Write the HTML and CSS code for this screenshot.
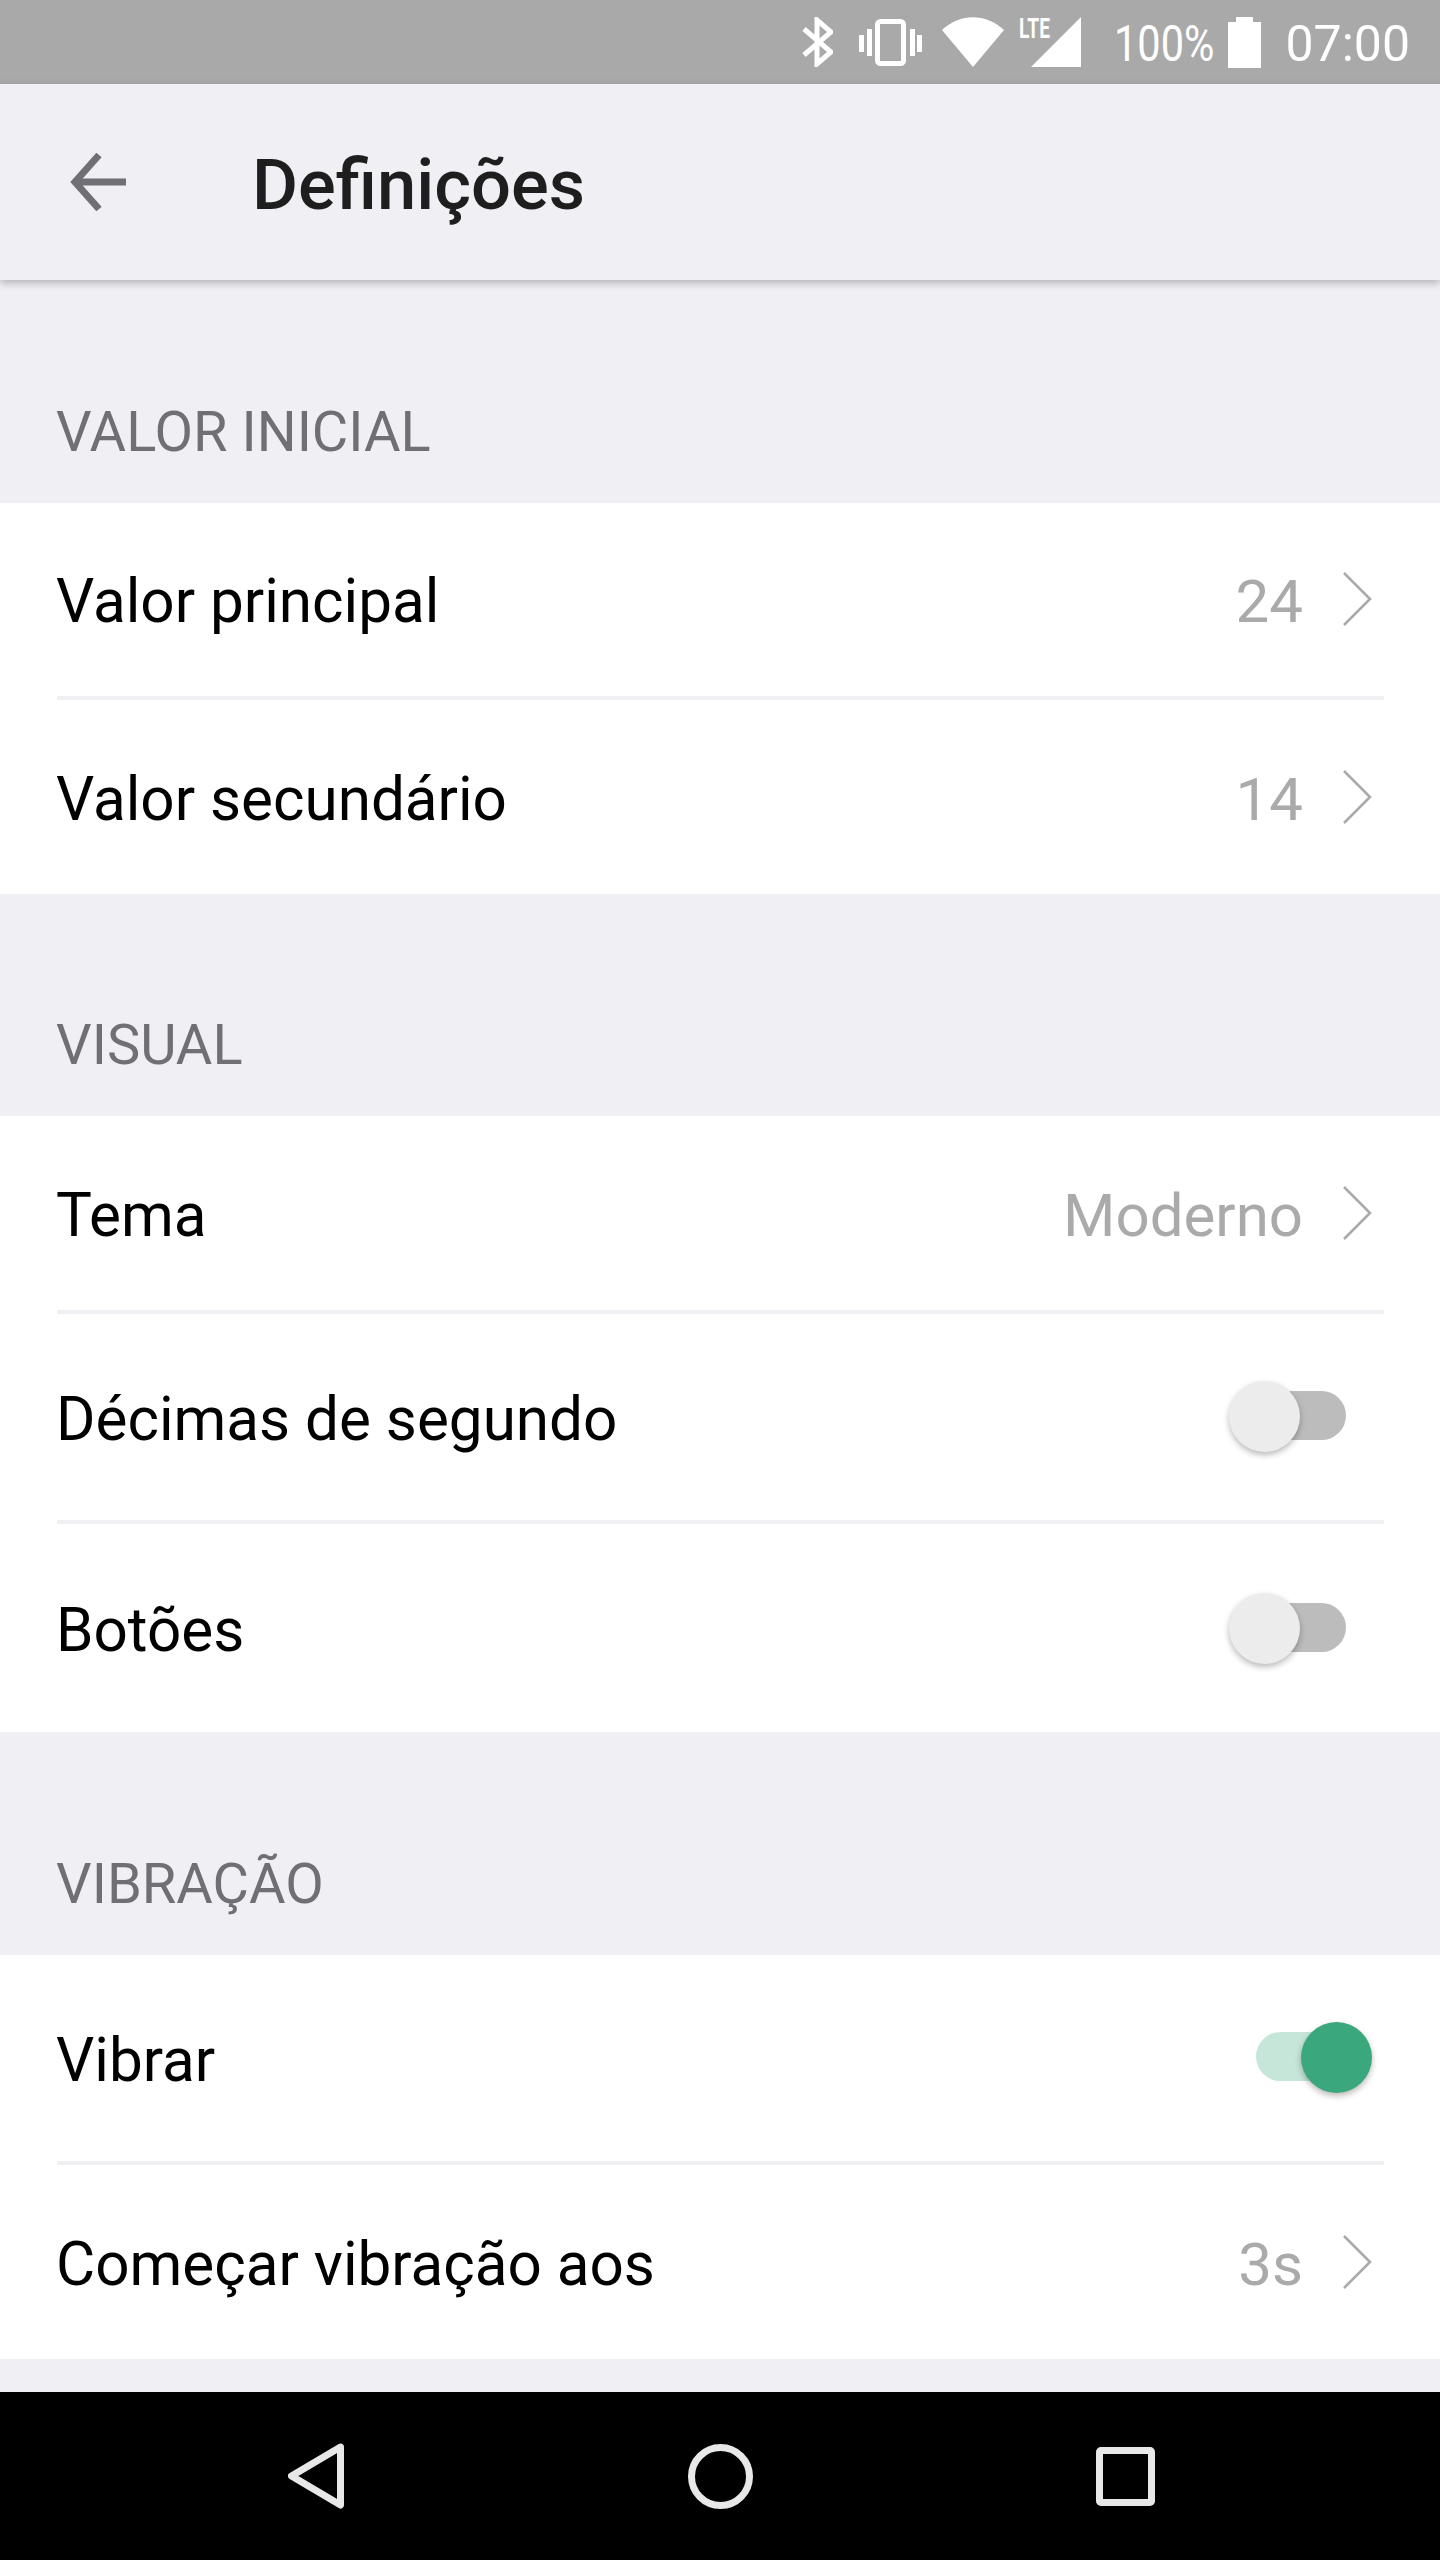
FILE: index.html
```html
<!DOCTYPE html>
<html lang="pt">
  <head>
    <meta charset="UTF-8" />
    <meta name="viewport" content="width=device-width, initial-scale=1.0" />
    <title>Definições</title>
    <link rel="stylesheet" href="styles.css">
  </head>
  <body>
    <div class="phone">
      <!-- Android status bar -->
      <div class="status-bar">
        <svg class="icon-bluetooth" width="31" height="50" viewBox="0 0 31 50">
          <path d="M2 12 L29 35 L15 47 V3 L29 15 L2 38" fill="none" stroke="#fff" stroke-width="5" />
        </svg>
        <svg class="icon-vibrate" width="63" height="47" viewBox="0 0 63 47">
          <rect x="18.5" y="2.5" width="26" height="42" rx="3" fill="none" stroke="#fff" stroke-width="5" />
          <path d="M0 16h5v17H0z M8 10h5v27H8z M51 10h5v27h-5z M58 16h5v17h-5z" fill="#fff" />
        </svg>
        <svg class="icon-wifi" width="62" height="50" viewBox="0 0 62 50">
          <path d="M0 13 C18 -4 44 -4 62 13 L31 50 Z" fill="#fff" />
        </svg>
        <svg class="icon-signal" width="62" height="84" viewBox="0 -17 62 84">
          <path d="M12 50 L62 0 V50 Z" fill="#fff" />
          <text class="lte-text" x="0" y="21" textLength="31" lengthAdjust="spacingAndGlyphs">LTE</text>
        </svg>
        <span class="battery-text">100%</span>
        <svg class="icon-battery" width="33" height="51" viewBox="0 0 33 51">
          <path d="M8 0h17v5h8v46H0V5h8z" fill="#fff" />
        </svg>
        <span class="clock">07:00</span>
      </div>

      <!-- Top bar -->
      <div class="app-bar">
        <svg class="back-arrow" width="56" height="58" viewBox="0 0 56 58">
          <path d="M56 29H6 M29 2 L5 29 L29 56" fill="none" stroke="#6f6f75" stroke-width="7" />
        </svg>
        <h1 class="title">Definições</h1>
      </div>

      <div class="content">
        <div class="section-label">VALOR INICIAL</div>
        <div class="group">
          <div class="row">
            <span class="row-name">Valor principal</span>
            <span class="row-value">24</span>
            <svg class="chevron" width="30" height="54" viewBox="0 0 30 54">
              <path d="M2 1 L28 27 L2 53" fill="none" stroke="#aaa" stroke-width="2.6" />
            </svg>
          </div>
          <div class="row">
            <span class="row-name">Valor secundário</span>
            <span class="row-value">14</span>
            <svg class="chevron" width="30" height="54" viewBox="0 0 30 54">
              <path d="M2 1 L28 27 L2 53" fill="none" stroke="#aaa" stroke-width="2.6" />
            </svg>
          </div>
        </div>

        <div class="section-label">VISUAL</div>
        <div class="group">
          <div class="row">
            <span class="row-name">Tema</span>
            <span class="row-value">Moderno</span>
            <svg class="chevron" width="30" height="54" viewBox="0 0 30 54">
              <path d="M2 1 L28 27 L2 53" fill="none" stroke="#aaa" stroke-width="2.6" />
            </svg>
          </div>
          <div class="row row-tall">
            <span class="row-name">Décimas de segundo</span>
            <div class="toggle"><div class="track"></div><div class="thumb"></div></div>
          </div>
          <div class="row row-tall">
            <span class="row-name">Botões</span>
            <div class="toggle"><div class="track"></div><div class="thumb"></div></div>
          </div>
        </div>

        <div class="section-label">VIBRAÇÃO</div>
        <div class="group">
          <div class="row row-tall">
            <span class="row-name">Vibrar</span>
            <div class="toggle on"><div class="track"></div><div class="thumb"></div></div>
          </div>
          <div class="row">
            <span class="row-name">Começar vibração aos</span>
            <span class="row-value">3s</span>
            <svg class="chevron" width="30" height="54" viewBox="0 0 30 54">
              <path d="M2 1 L28 27 L2 53" fill="none" stroke="#aaa" stroke-width="2.6" />
            </svg>
          </div>
        </div>
      </div>

      <!-- Android nav bar -->
      <div class="nav-bar">
        <svg width="56" height="66" viewBox="0 0 56 66">
          <path d="M52.5 4 L3.5 33 L52.5 62 Z" fill="none" stroke="#e8e8e8" stroke-width="7" stroke-linejoin="round" />
        </svg>
        <svg width="65" height="65" viewBox="0 0 65 65">
          <circle cx="32.5" cy="32.5" r="29" fill="none" stroke="#e8e8e8" stroke-width="7" />
        </svg>
        <svg width="59" height="59" viewBox="0 0 59 59">
          <rect x="3.5" y="3.5" width="52" height="52" rx="1.5" fill="none" stroke="#e8e8e8" stroke-width="7" />
        </svg>
      </div>
    </div>
  </body>
</html>
```

FILE: styles.css
```css
/* Settings screen */
body {
  font-family: Roboto, "Liberation Sans", sans-serif;
  margin: 0;
  background-color: #efeff4;
}
.phone {
  display: flex;
  flex-direction: column;
  height: 2560px;
  overflow: hidden;
}

/* Status bar */
.status-bar {
  display: flex;
  align-items: center;
  justify-content: flex-end;
  height: 84px;
  padding-right: 30px;
  background-color: #a9a9a9;
  color: white;
  flex-shrink: 0;
}
.icon-bluetooth {
  margin-right: 26px;
}
.icon-vibrate {
  margin-right: 20px;
}
.icon-wifi {
  margin-right: 15px;
}
.icon-signal {
  margin-right: 33px;
}
.lte-text {
  font-size: 28px;
  font-weight: 700;
  fill: white;
}
.battery-text {
  width: 98px;
  margin-top: 3px;
  margin-right: 16px;
  font-size: 50px;
  white-space: nowrap;
  transform: scaleX(0.83);
  transform-origin: left center;
}
.icon-battery {
  margin-right: 24px;
}
.clock {
  margin-top: 3px;
  font-size: 50px;
}

/* App bar */
.app-bar {
  display: flex;
  align-items: center;
  height: 196px;
  padding-left: 70px;
  background-color: #efeff4;
  box-shadow: 0 3px 8px rgba(0, 0, 0, 0.25);
  position: relative;
  flex-shrink: 0;
}
.back-arrow {
  margin-right: 126px;
}
.title {
  margin: 5px 0 0;
  font-size: 70.5px;
  font-weight: 500;
  color: #1e1e1e;
}

/* List */
.content {
  flex: 1;
}
.section-label {
  display: flex;
  align-items: flex-end;
  height: 222.5px;
  box-sizing: border-box;
  padding: 0 0 38px 56px;
  font-size: 56px;
  color: #6f6f75;
}
.group {
  background-color: white;
}
.row {
  display: flex;
  align-items: center;
  height: 193.5px;
  margin-left: 57px;
  margin-right: 56px;
  border-bottom: 4px solid #efeff4;
}
.row:last-child {
  border-bottom: none;
}
.row-tall {
  height: 206.5px;
}
.row-tall:last-child {
  height: 208px;
}
.row-name {
  flex: 1;
  margin-top: 5px;
  margin-left: -1px;
  font-size: 60.2px;
  color: black;
}
.row-value {
  margin-top: 5px;
  font-size: 60px;
  color: #aaa;
}
.chevron {
  margin-left: 39px;
  margin-right: 12px;
}

/* Switches */
.toggle {
  position: relative;
  width: 143px;
  height: 71px;
  margin-right: 12px;
}
.track {
  height: 49px;
  margin: 10px 26px 0 27px;
  border-radius: 25px;
  background-color: #bcbcbc;
}
.thumb {
  position: absolute;
  top: 0;
  left: 0;
  width: 71px;
  height: 71px;
  border-radius: 50%;
  background-color: #ececec;
  box-shadow: 0 3px 6px rgba(0, 0, 0, 0.28);
}
.toggle.on .track {
  background-color: #c6e6da;
}
.toggle.on .thumb {
  left: 72px;
  background-color: #3aa87c;
}

/* Nav bar */
.nav-bar {
  display: flex;
  align-items: center;
  justify-content: center;
  gap: 343.5px;
  height: 168px;
  padding-left: 3px;
  background-color: black;
  flex-shrink: 0;
}
```
